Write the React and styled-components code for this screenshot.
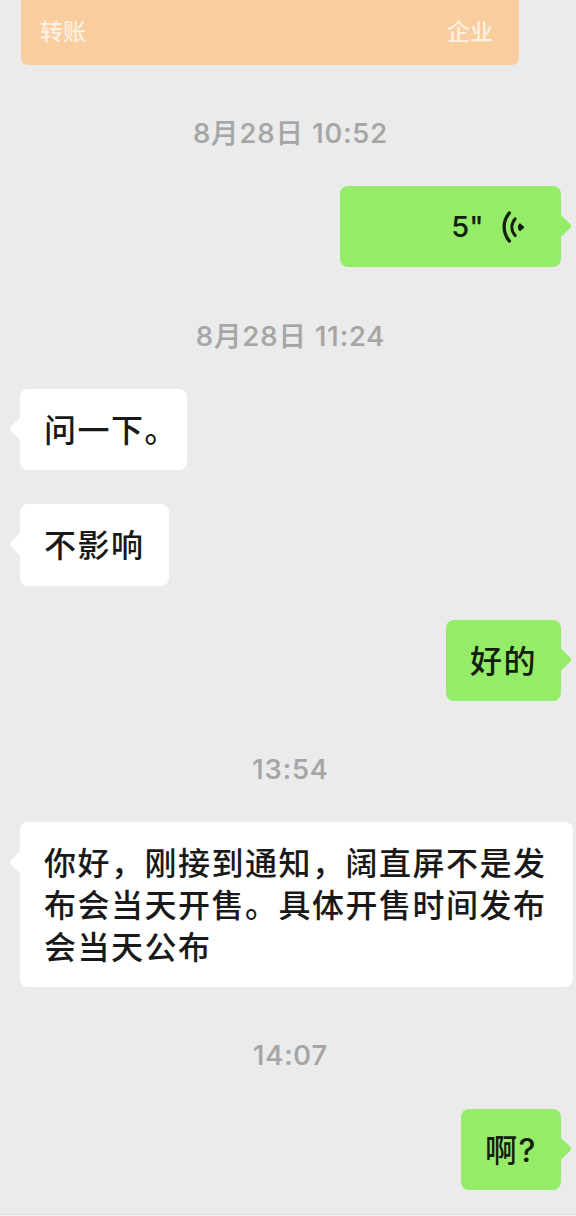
import React from 'react'
import styled, { createGlobalStyle } from 'styled-components';

const messages = [
    { type: 'time', text: '8月28日 10:52' },
    { type: 'voice', mine: true, text: '5"' },
    { type: 'time', text: '8月28日 11:24' },
    { type: 'text', text: '问一下。' },
    { type: 'text', text: '不影响' },
    { type: 'text', mine: true, text: '好的' },
    { type: 'time', text: '13:54' },
    { type: 'text', text: '你好，刚接到通知，阔直屏不是发布会当天开售。具体开售时间发布会当天公布' },
    { type: 'time', text: '14:07' },
    { type: 'text', mine: true, text: '啊?' },
]

function VoiceIcon() {
    return (
        <VoiceSvg viewBox="0 0 24 32" fill="none" stroke="#10200a" strokeLinecap="round">
            <path d="M7.4 1.9C0.4 10.3 0.4 21.7 7.4 30.1" strokeWidth="3.3" />
            <path d="M13.2 7.8C8.8 13 8.8 19.5 13.2 24.6" strokeWidth="3" />
            <path d="M18 13.4L21.2 16.2L18 19C16.6 17.3 16.6 15.1 18 13.4Z" fill="#10200a" strokeWidth="2" strokeLinejoin="round" />
        </VoiceSvg>
    )
}

function Message({ type, mine, text }) {
    if (type === 'time') {
        return <Time>{text}</Time>
    }

    return (
        <Row $mine={mine}>
            <Bubble $mine={mine} $voice={type === 'voice'}>
                <BubbleText $fullStop={text.endsWith('。')}>{text}</BubbleText>
                {type === 'voice' && <VoiceIcon />}
            </Bubble>
        </Row>
    )
}

function App() {
    return (
        <Chat lang="zh-CN">
            <GlobalStyle />
            <TransferCard>
                <span>转账</span>
                <span>企业</span>
            </TransferCard>
            {messages.map((message, index) => (
                <Message key={index} {...message} />
            ))}
            <InputEdge />
        </Chat>
    )
}

export default App

const GlobalStyle = createGlobalStyle`
body{
    margin:0;
    background-color:#ebebeb;
}
`
const Chat = styled.div`
display:flex;
flex-direction:column;
box-sizing:border-box;
width:576px;
height:1216px;
overflow:hidden;
background-color:#ebebeb;
font-family:Inter, "Noto Sans CJK SC", sans-serif;
`
const TransferCard = styled.div`
display:flex;
justify-content:space-between;
align-items:center;
flex-shrink:0;
box-sizing:border-box;
width:498px;
height:64.5px;
margin-left:21px;
padding:0 26px 0 19px;
border-radius:0 0 7px 7px;
background-color:#facd9e;
color:#fdf0e2;
font-size:23px;
font-weight:500;
line-height:34px;
`
const Time = styled.div`
flex-shrink:0;
box-sizing:border-box;
height:121.6px;
padding:51.2px 0 0 5px;
text-align:center;
color:#a5a5a5;
font-size:27.5px;
font-weight:500;
line-height:34px;
letter-spacing:0.9px;
-webkit-text-stroke:0.2px #a5a5a5;
`
const Row = styled.div`
display:flex;
flex-shrink:0;
justify-content:${({ $mine }) => ($mine ? 'flex-end' : 'flex-start')};
padding:0 ${({ $mine }) => ($mine ? '15px' : '3px')} 0 20px;

& + & {
    margin-top:34px;
}
`
const Bubble = styled.div`
position:relative;
display:flex;
align-items:center;
justify-content:${({ $voice }) => ($voice ? 'flex-end' : 'flex-start')};
gap:18px;
box-sizing:border-box;
width:${({ $voice }) => ($voice ? '221px' : 'auto')};
min-height:81.3px;
padding:${({ $voice }) => ($voice ? '20px 35.5px 19.5px 24px' : '21px 24px 18.6px')};
border-radius:8px;
background-color:${({ $mine }) => ($mine ? '#95ec69' : '#ffffff')};
color:${({ $mine }) => ($mine ? '#10200a' : '#191919')};
font-size:${({ $voice }) => ($voice ? '29px' : '32px')};
font-weight:500;
line-height:41.7px;
letter-spacing:${({ $voice }) => ($voice ? '0' : '1.5px')};

&::after {
    content:'';
    position:absolute;
    top:28px;
    ${({ $mine }) => ($mine ? 'right:-10px;' : 'left:-10px;')}
    width:11px;
    height:24px;
    background-color:inherit;
    clip-path:${({ $mine }) => ($mine
        ? 'polygon(0 0, 100% 45%, 100% 55%, 0 100%)'
        : 'polygon(100% 0, 0 45%, 0 55%, 100% 100%)')};
}
`
// a closing full stop only takes half of its box
const BubbleText = styled.span`
margin-right:${({ $fullStop }) => ($fullStop ? '-15px' : '0')};
`
const VoiceSvg = styled.svg`
width:24px;
height:32px;
`
const InputEdge = styled.div`
flex-shrink:0;
height:1px;
margin-top:auto;
border-top:1px solid #dedede;
background-color:#f3f3f3;
`
